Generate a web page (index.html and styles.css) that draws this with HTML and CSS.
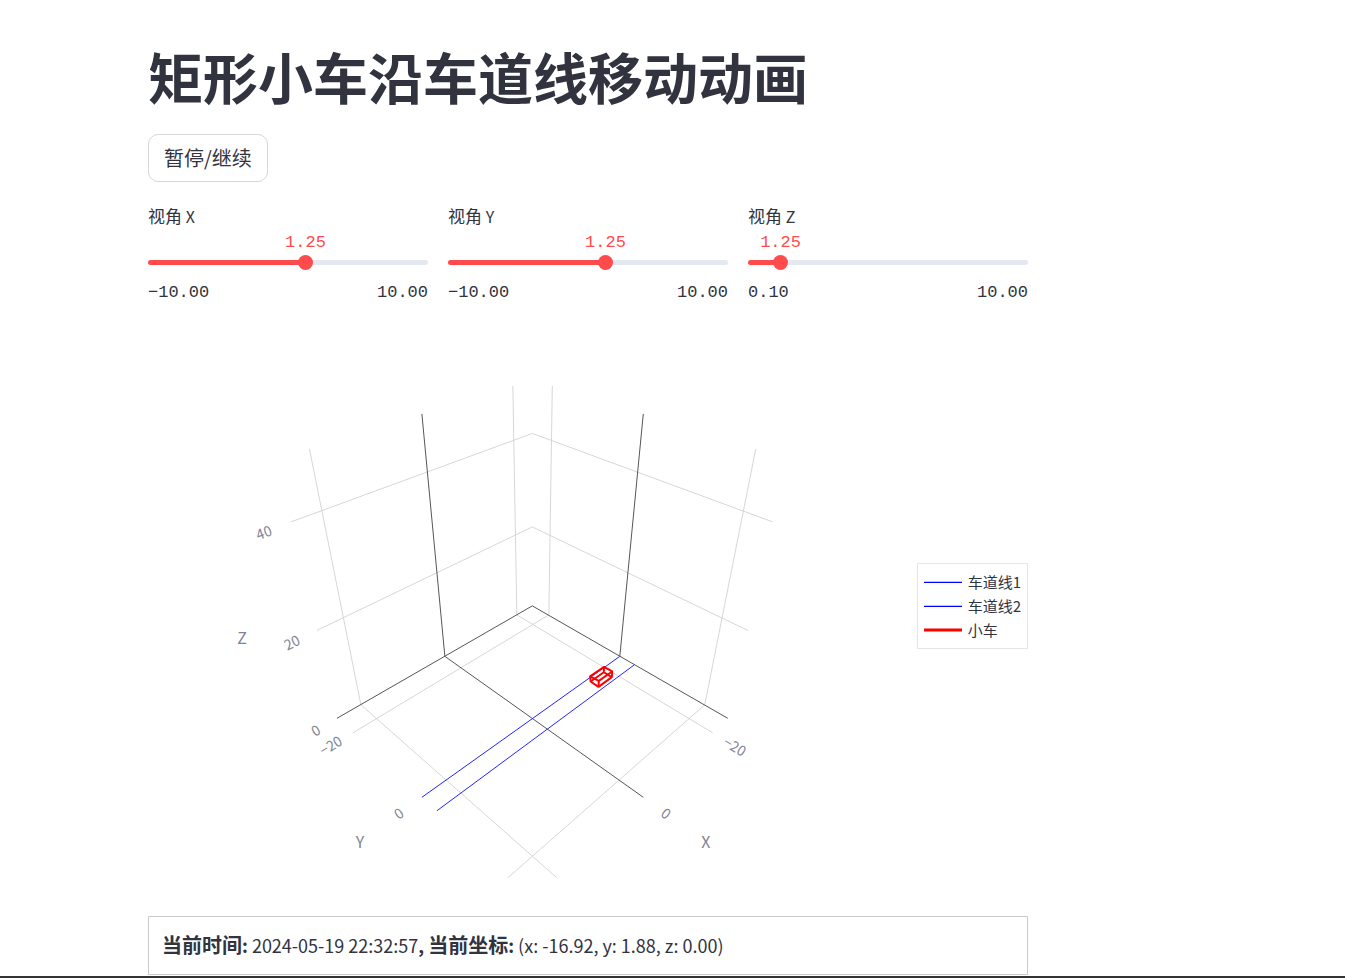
FILE: index.html
```html
<!DOCTYPE html>
<html lang="zh-CN">
<head>
<meta charset="utf-8">
<meta name="viewport" content="width=device-width, initial-scale=1">
<title>矩形小车沿车道线移动动画</title>
<link rel="stylesheet" href="styles.css">
</head>
<body>
<main class="page">
  <h1 class="title">矩形小车沿车道线移动动画</h1>
  <button class="toggle" type="button">暂停/继续</button>

  <section class="sliders">
    <div class="slider">
      <label class="slider-label" for="view-x">视角 <span class="latin">X</span></label>
      <div class="slider-value-row"><output class="slider-value" for="view-x" style="left: 56.25%">1.25</output></div>
      <div class="track" style="--fill: 56.25%"><input class="range" id="view-x" type="range" min="-10" max="10" step="0.01" value="1.25"></div>
      <div class="bounds"><span>−10.00</span><span>10.00</span></div>
    </div>
    <div class="slider">
      <label class="slider-label" for="view-y">视角 <span class="latin">Y</span></label>
      <div class="slider-value-row"><output class="slider-value" for="view-y" style="left: 56.25%">1.25</output></div>
      <div class="track" style="--fill: 56.25%"><input class="range" id="view-y" type="range" min="-10" max="10" step="0.01" value="1.25"></div>
      <div class="bounds"><span>−10.00</span><span>10.00</span></div>
    </div>
    <div class="slider">
      <label class="slider-label" for="view-z">视角 <span class="latin">Z</span></label>
      <div class="slider-value-row"><output class="slider-value" for="view-z" style="left: 11.62%">1.25</output></div>
      <div class="track" style="--fill: 11.62%"><input class="range" id="view-z" type="range" min="0.1" max="10" step="0.01" value="1.25"></div>
      <div class="bounds"><span>0.10</span><span>10.00</span></div>
    </div>
  </section>

  <section class="plot">
    <svg class="scene" viewBox="148 326 769 560" role="img" aria-label="车道线与小车三维图">
      <g class="grid">
        <path d="M309.5 449L361 705L557 878"/>
        <path d="M756 449L705 705L508 878"/>
        <path d="M513 386L517 615L713 733"/>
        <path d="M552.5 386L549 615L353 733"/>
        <path d="M291 522L532.5 433.5L773 522"/>
        <path d="M317 630.5L532.5 527L748 630.5"/>
      </g>
      <g class="zero">
        <path d="M337 718.5L532.5 606L728 718.5"/>
        <path d="M422 414L445 656.5L643.5 797.5"/>
        <path d="M643.5 414L620 656.5"/>
      </g>
      <g class="lane">
        <path d="M620 656.5L422 797.5"/>
        <path d="M634.5 665L437 811"/>
      </g>
      <g class="car">
        <path d="M604.3 667L612.4 671.6L612 677.3L598.7 687L590.8 681.7L590.3 676.5Z"/>
        <path d="M590.3 676.5L599 681L612.4 671.6M599 681L598.7 687"/>
        <path d="M604.3 667L604 672.4L612 677.3M604 672.4L590.8 681.7"/>
      </g>
      <g class="ticks">
        <text transform="translate(264 533) rotate(-20)" dy="5">40</text>
        <text transform="translate(292 643) rotate(-26)" dy="5">20</text>
        <text transform="translate(316 731) rotate(-30)" dy="5">0</text>
        <text transform="translate(331 746) rotate(-31)" dy="5">−20</text>
        <text transform="translate(399 814) rotate(-36)" dy="5">0</text>
        <text transform="translate(666 814) rotate(36)" dy="5">0</text>
        <text transform="translate(735 747) rotate(31)" dy="5">−20</text>
      </g>
      <g class="axis-names">
        <text x="242" y="644">Z</text>
        <text x="360" y="848">Y</text>
        <text x="706" y="848">X</text>
      </g>
    </svg>
    <ul class="legend">
      <li><svg class="key" viewBox="0 0 38 6" aria-hidden="true"><path d="M0 3.3H38"/></svg>车道线1</li>
      <li><svg class="key" viewBox="0 0 38 6" aria-hidden="true"><path d="M0 3.3H38"/></svg>车道线2</li>
      <li><svg class="key key-car" viewBox="0 0 38 6" aria-hidden="true"><path d="M0 3H38"/></svg>小车</li>
    </ul>
  </section>

  <p class="status"><strong>当前时间<span class="latin">:</span></strong> 2024-05-19 22:32:57<b>,</b> <strong>当前坐标<span class="latin">:</span></strong> (x: -16.92, y: 1.88, z: 0.00)</p>
</main>
</body>
</html>
```

FILE: styles.css
```css
* {
  box-sizing: border-box;
}

body {
  margin: 0;
  min-height: 100vh;
  background: #fff;
  border-bottom: 2px solid #333;
  color: #31333f;
  font-family: "Noto Sans CJK SC", sans-serif;
}

.page {
  max-width: 1028px;
  padding: 42px 0 1px 148px;
}

.title {
  margin: 0;
  font-size: 55px;
  font-weight: 700;
  line-height: 66px;
}

.toggle {
  display: block;
  height: 48px;
  margin-top: 26px;
  padding: 0 15px 2px;
  border: 1px solid #d6d6d9;
  border-radius: 10px;
  background: #fff;
  color: inherit;
  font: inherit;
  font-size: 20px;
}

.sliders {
  display: grid;
  grid-template-columns: repeat(3, 1fr);
  gap: 20px;
  margin-top: 21px;
}

.slider-label {
  display: block;
  font-size: 17px;
  line-height: 26px;
}

.slider-label .latin {
  font-size: 16px;
}

.slider-value-row {
  position: relative;
  height: 31px;
}

.slider-value {
  position: absolute;
  top: 4px;
  transform: translateX(-50%);
  color: #ff4b4b;
  font-family: "Liberation Mono", monospace;
  font-size: 17px;
  line-height: 20px;
}

.track {
  height: 5px;
  border-radius: 3px;
  background: linear-gradient(to right, #ff4b4b var(--fill), #e4e9f1 var(--fill));
}

.range {
  display: block;
  appearance: none;
  width: calc(100% + 16px);
  height: 5px;
  margin: 0 -8px;
  background: transparent;
}

.range::-webkit-slider-thumb {
  appearance: none;
  width: 15px;
  height: 15px;
  border: 0;
  border-radius: 50%;
  background: #ff4b4b;
}

.bounds {
  display: flex;
  justify-content: space-between;
  margin-top: 17px;
  font-family: "Liberation Mono", monospace;
  font-size: 17px;
  line-height: 22px;
}

.plot {
  display: flex;
  align-items: center;
  margin-top: 22px;
}

.scene {
  display: block;
  flex: 1;
  min-width: 0;
}

.grid path,
.zero path,
.lane path,
.car path {
  fill: none;
}

.grid path {
  stroke: #d6d6d6;
}

.zero path {
  stroke: #555;
}

.lane path {
  stroke: #22f;
}

.car path {
  stroke: #f00;
  stroke-width: 2;
  stroke-linejoin: round;
}

.ticks,
.axis-names {
  fill: #808495;
  font-size: 14px;
  text-anchor: middle;
}

.axis-names {
  font-size: 16px;
}

.legend {
  margin: 0;
  padding: 6px;
  border: 1px solid #e6e6e6;
  color: #31333f;
  font-size: 15px;
  line-height: 24px;
  list-style: none;
}

.legend li {
  display: flex;
  align-items: center;
  gap: 6px;
}

.key {
  width: 38px;
  height: 6px;
  fill: none;
  stroke: #00f;
  stroke-width: 1.3;
}

.key-car {
  stroke: #f00;
  stroke-width: 3;
}

.status {
  margin: 30px 0 0;
  padding: 14px 13px;
  border: 1px solid #ccc;
  font-size: 18px;
  line-height: 29px;
}

.status strong {
  font-size: 20px;
  line-height: 20px;
}

.status .latin {
  font-size: 18px;
}
```
